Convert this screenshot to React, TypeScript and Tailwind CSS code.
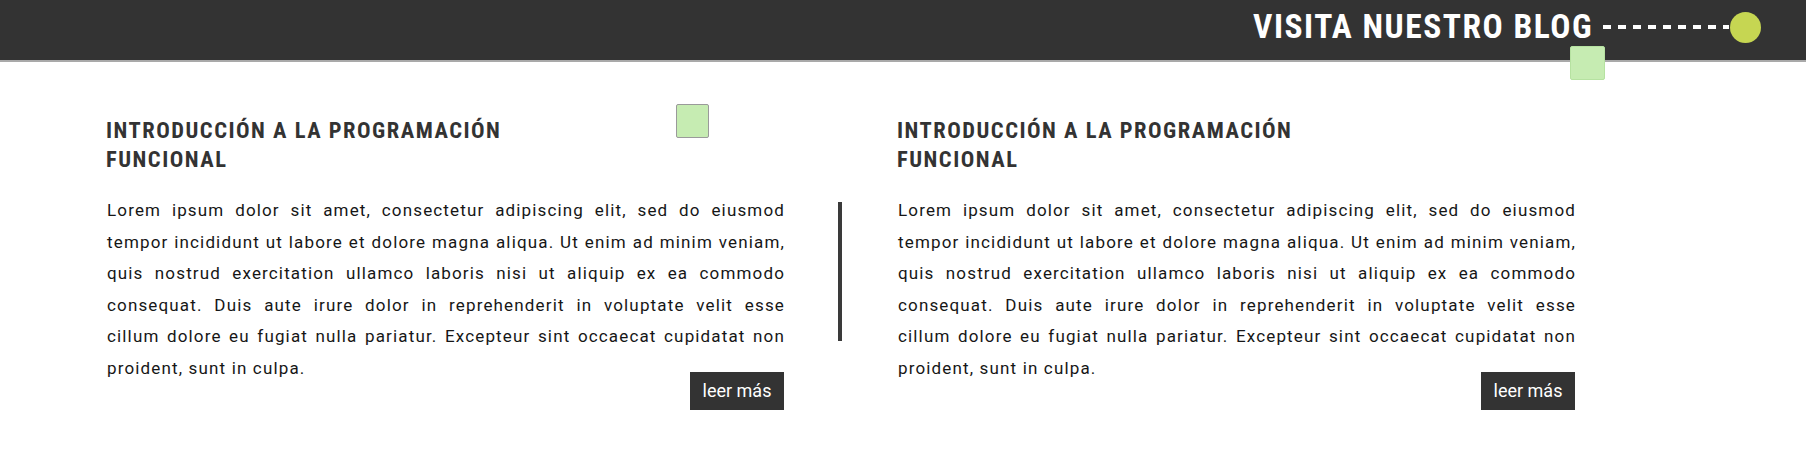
import React from "react";

const lines = [
  "Lorem ipsum dolor sit amet, consectetur adipiscing elit, sed do eiusmod",
  "tempor incididunt ut labore et dolore magna aliqua. Ut enim ad minim veniam,",
  "quis nostrud exercitation ullamco laboris nisi ut aliquip ex ea commodo",
  "consequat. Duis aute irure dolor in reprehenderit in voluptate velit esse",
  "cillum dolore eu fugiat nulla pariatur. Excepteur sint occaecat cupidatat non",
  "proident, sunt in culpa.",
];

function Post({ withSquare }: { withSquare?: boolean }) {
  return (
    <div className="w-[677px] pt-[54px] flex flex-col">
      <div className="relative">
        <h2 className="w-[460px] -ml-[1px] font-['Liberation_Sans_Narrow','Roboto_Condensed','Liberation_Sans',sans-serif] font-bold text-[22.5px] leading-[29px] tracking-[1.5px] text-[#333333] uppercase">
          Introducción a la programación funcional
        </h2>
        {withSquare && (
          <div className="absolute left-[569px] top-[-12px] w-[33px] h-[34px] bg-[#c6ecb2] border border-[#9a9a9a] rounded-[2px]" />
        )}
      </div>
      <p className="mt-[21px] w-[678px] font-['Roboto',sans-serif] text-[17px] leading-[31.5px] tracking-[1.15px] text-[#161616]">
        {lines.map((l, i) => (
          <span
            key={i}
            className={
              i < lines.length - 1
                ? "block text-justify [text-align-last:justify] whitespace-nowrap"
                : "block whitespace-nowrap"
            }
          >
            {l}
          </span>
        ))}
      </p>
      <div className="flex justify-end mt-[-12.5px]">
        <button className="w-[94px] h-[38px] bg-[#333333] text-white font-['Roboto',sans-serif] text-[18px] flex items-center justify-center">
          leer más
        </button>
      </div>
    </div>
  );
}

export default function App() {
  return (
    <div className="w-[1806px] h-[464px] bg-white overflow-hidden">
      <header className="relative h-[62px] bg-[#333333] border-b-2 border-[#a9a9a9] flex justify-end pr-[45px]">
        <div className="flex items-center h-[54px]">
          <span className="font-['Liberation_Sans_Narrow','Roboto_Condensed','Liberation_Sans',sans-serif] font-bold text-[33.5px] leading-none tracking-[1.5px] text-white uppercase">
            Visita nuestro blog
          </span>
          <svg className="ml-[10px]" width="126" height="4" viewBox="0 0 126 4">
            <line x1="0" y1="2" x2="126" y2="2" stroke="#ffffff" strokeWidth="4" strokeDasharray="8 7" />
          </svg>
          <div className="w-[31px] h-[31px] rounded-full bg-[#c6d652] ml-[1px]" />
        </div>
        <div className="absolute right-[201px] top-[46px] w-[35px] h-[34px] bg-[#c6ecb2] border border-[#b6e2a1] rounded-[2px]" />
      </header>
      <main className="flex pl-[107px]">
        <Post withSquare />
        <div className="ml-[54px] mr-[56px] mt-[140px] w-[4px] h-[139px] bg-[#3a3a3a] shrink-0" />
        <Post />
      </main>
    </div>
  );
}
